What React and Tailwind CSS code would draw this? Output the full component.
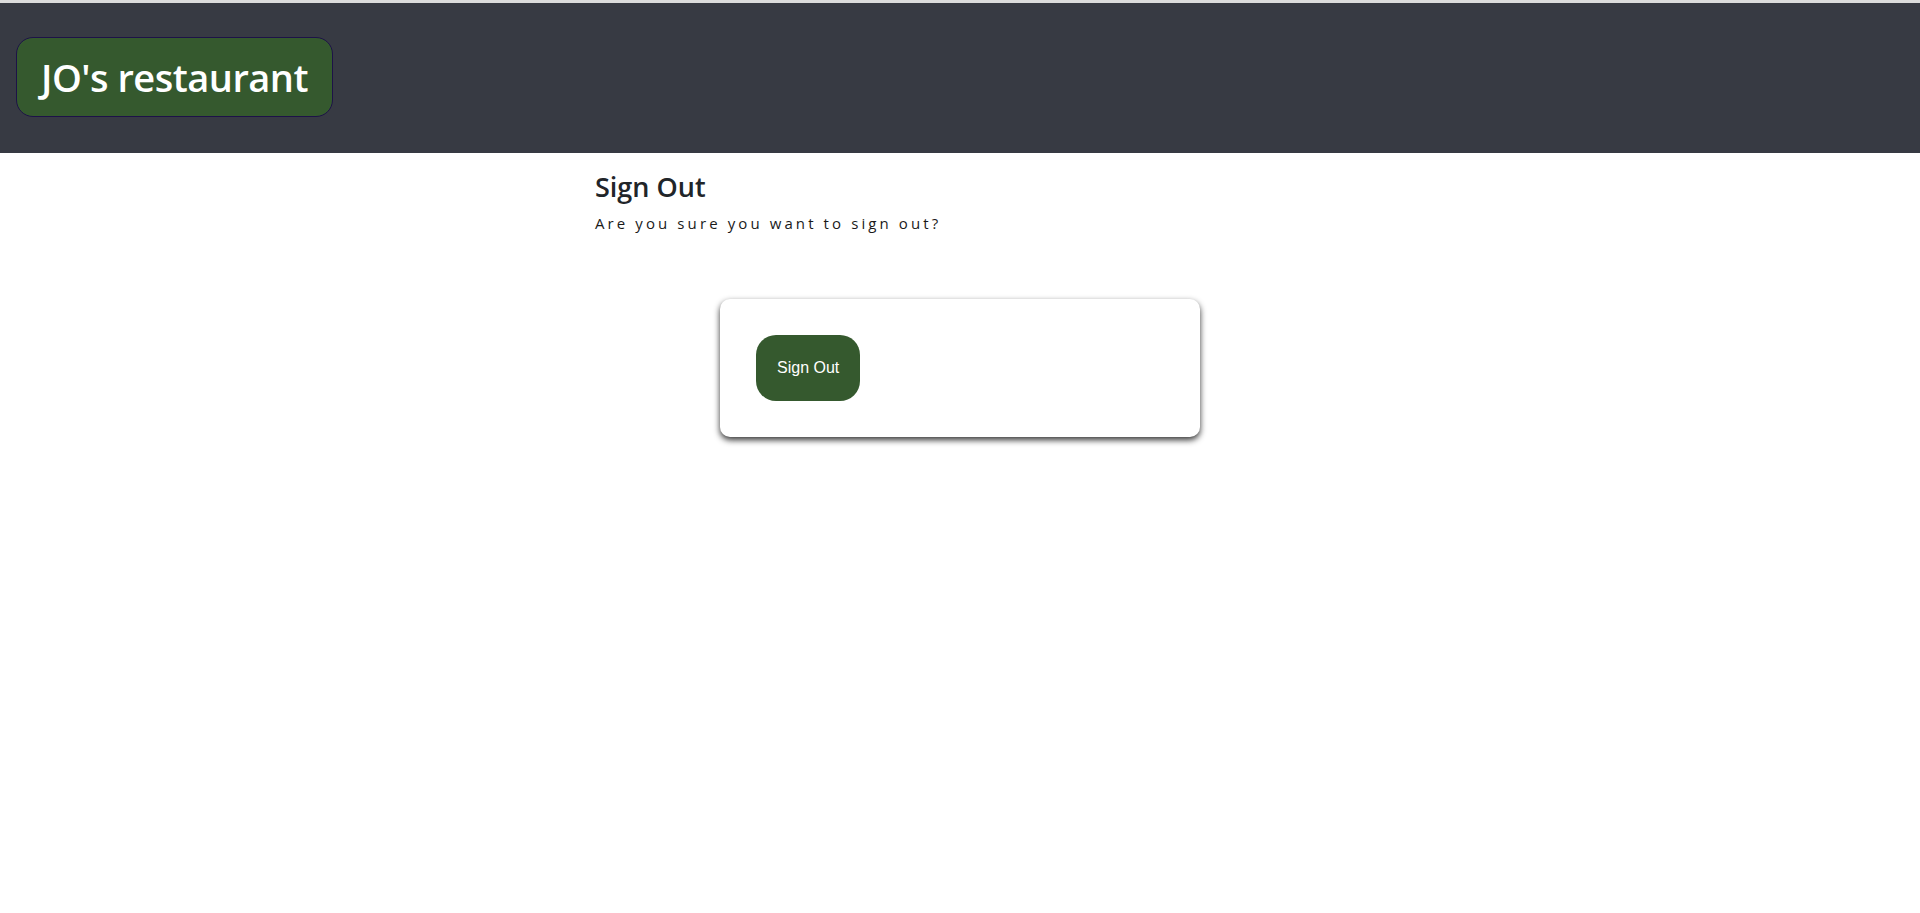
import React from 'react';

const sans = { fontFamily: '"Open Sans", "Noto Sans", sans-serif' };

export default function App() {
  return (
    <div className="min-h-[913px] bg-white" style={sans}>
      {/* Header */}
      <header className="border-t-[3px] border-[#dcdcdc] bg-[#373a43] h-[153px] flex items-center pl-4">
        <div className="h-[80px] px-6 flex items-center rounded-[17px] border border-[#1d1248] bg-[#35592e] -mt-[2px]">
          <span className="text-white text-[38px] font-semibold leading-none tracking-[-0.5px]">JO's restaurant</span>
        </div>
      </header>

      {/* Body */}
      <main className="pl-[595px] pt-[18px]">
        <h2 className="text-[27px] font-semibold text-[#212529] leading-[1.2]">Sign Out</h2>
        <p className="mt-[9px] text-[15px] text-[#1a1a1a] tracking-[3.1px] leading-normal">
          Are you sure you want to sign out?
        </p>
      </main>

      <div className="flex justify-center pt-[64px]">
        <div className="w-[480px] rounded-[10px] bg-white p-9 shadow-[0_3px_6px_rgba(0,0,0,0.8)]">
          <button
            className="rounded-[20px] bg-[#35592e] text-white text-[16px] px-[21px] py-[24px] leading-[18px]"
            style={{ fontFamily: '"Liberation Sans", Arial, sans-serif' }}
          >
            Sign Out
          </button>
        </div>
      </div>
    </div>
  );
}
